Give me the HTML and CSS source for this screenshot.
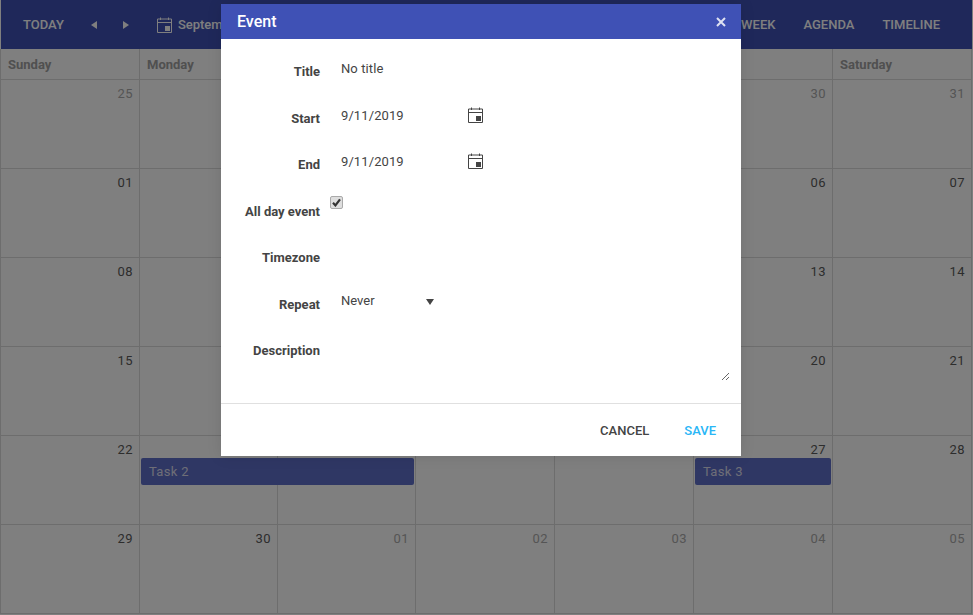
FILE: index.html
```html
<!DOCTYPE html>
<html lang="en">
<head>
  <meta charset="UTF-8">
  <title>Scheduler</title>
  <link rel="stylesheet" href="styles.css">
</head>
<body>
  <div class="scheduler">
    <!-- toolbar -->
    <div class="toolbar">
      <div class="toolbar-left">
        <span class="tool-btn">TODAY</span>
        <svg class="arrow" width="7" height="8" viewBox="0 0 7 8"><path d="M6 0V8L0 4Z"/></svg>
        <svg class="arrow" width="7" height="8" viewBox="0 0 7 8"><path d="M1 0V8L7 4Z"/></svg>
        <span class="tool-date">
          <svg class="cal-icon" width="15" height="16" viewBox="0 0 15 16"><path d="M3.5 0.5V3M11.5 0.5V3M0.5 2H14.5V15.5H0.5ZM0.5 5.5H14.5"/><rect x="8.5" y="9.5" width="4" height="4"/></svg>
          Septem
        </span>
      </div>
      <div class="toolbar-right">
        <span class="tool-btn">WEEK</span>
        <span class="tool-btn">AGENDA</span>
        <span class="tool-btn">TIMELINE</span>
      </div>
    </div>

    <!-- day names, the ones behind the dialog stay empty -->
    <div class="days-head">
      <div class="day-name">Sunday</div>
      <div class="day-name">Monday</div>
      <div class="day-name"></div>
      <div class="day-name"></div>
      <div class="day-name"></div>
      <div class="day-name"></div>
      <div class="day-name">Saturday</div>
    </div>

    <!-- month grid -->
    <div class="week">
      <div class="day muted">25</div><div class="day"></div><div class="day"></div><div class="day"></div><div class="day"></div><div class="day muted">30</div><div class="day muted">31</div>
    </div>
    <div class="week">
      <div class="day">01</div><div class="day"></div><div class="day"></div><div class="day"></div><div class="day"></div><div class="day">06</div><div class="day">07</div>
    </div>
    <div class="week">
      <div class="day">08</div><div class="day"></div><div class="day"></div><div class="day"></div><div class="day"></div><div class="day">13</div><div class="day">14</div>
    </div>
    <div class="week">
      <div class="day">15</div><div class="day"></div><div class="day"></div><div class="day"></div><div class="day"></div><div class="day">20</div><div class="day">21</div>
    </div>
    <div class="week">
      <div class="day">22</div><div class="day"></div><div class="day"></div><div class="day"></div><div class="day"></div><div class="day">27</div><div class="day">28</div>
      <div class="tasks">
        <div class="task task-2">Task 2</div>
        <div class="task task-3">Task 3</div>
      </div>
    </div>
    <div class="week">
      <div class="day">29</div><div class="day">30</div><div class="day muted">01</div><div class="day muted">02</div><div class="day muted">03</div><div class="day muted">04</div><div class="day muted">05</div>
    </div>
  </div>

  <div class="overlay"></div>

  <!-- edit dialog -->
  <div class="dialog">
    <div class="dialog-head">
      <span class="dialog-title">Event</span>
      <svg class="close-icon" width="10" height="10" viewBox="0 0 10 10"><path d="M1 1L9 9M9 1L1 9"/></svg>
    </div>
    <div class="dialog-body">
      <div class="field">
        <label class="field-label">Title</label>
        <input class="field-input" type="text" value="No title" readonly>
      </div>
      <div class="field">
        <label class="field-label">Start</label>
        <input class="field-input date-input" type="text" value="9/11/2019" readonly>
        <svg class="cal-icon dark" width="15" height="16" viewBox="0 0 15 16"><path d="M3.5 0.5V3M11.5 0.5V3M0.5 2H14.5V15.5H0.5ZM0.5 5.5H14.5"/><rect x="8.5" y="9.5" width="4" height="4"/></svg>
      </div>
      <div class="field">
        <label class="field-label">End</label>
        <input class="field-input date-input" type="text" value="9/11/2019" readonly>
        <svg class="cal-icon dark" width="15" height="16" viewBox="0 0 15 16"><path d="M3.5 0.5V3M11.5 0.5V3M0.5 2H14.5V15.5H0.5ZM0.5 5.5H14.5"/><rect x="8.5" y="9.5" width="4" height="4"/></svg>
      </div>
      <div class="field">
        <label class="field-label">All day event</label>
        <span class="checkbox">
          <svg width="9" height="9" viewBox="0 0 9 9"><path d="M1 4.8L3.4 7.4L8 1.4"/></svg>
        </span>
      </div>
      <div class="field">
        <label class="field-label">Timezone</label>
      </div>
      <div class="field">
        <label class="field-label">Repeat</label>
        <span class="select-value">Never</span>
        <svg class="select-arrow" width="8" height="6" viewBox="0 0 8 6"><path d="M0 0H8L4 6Z"/></svg>
      </div>
      <div class="field">
        <label class="field-label">Description</label>
        <textarea class="field-text"></textarea>
      </div>
    </div>
    <div class="dialog-foot">
      <span class="foot-btn">CANCEL</span>
      <span class="foot-btn primary">SAVE</span>
    </div>
  </div>
</body>
</html>
```

FILE: styles.css
```css
* {
  box-sizing: border-box;
  margin: 0;
  padding: 0;
}
html, body {
  height: 100%;
  overflow: hidden;
}
body {
  background: #fff;
  font-family: Roboto, sans-serif;
  font-size: 13px;
  color: #333;
}
/* scheduler */
.scheduler {
  --cols: 139px 138px 138px 139px 139px 139px 139px;
  width: 973px;
  padding-right: 1px;
}
.toolbar {
  display: flex;
  justify-content: space-between;
  align-items: center;
  height: 49px;
  margin-left: 1px;
  background: #3f51b5;
  color: #fff;
  font-size: 13px;
  font-weight: 500;
}
.toolbar-left {
  display: flex;
  align-items: center;
  padding-left: 22px;
}
.toolbar-right {
  display: flex;
  align-items: center;
  gap: 28px;
  padding-right: 32px;
}
.arrow {
  fill: #fff;
  margin-left: 27px;
}
.arrow + .arrow {
  margin-left: 24px;
}
.tool-date {
  display: flex;
  align-items: center;
  gap: 6px;
  margin-left: 28px;
}
.cal-icon {
  flex: none;
  fill: none;
  stroke: #fff;
}
.cal-icon rect {
  fill: #fff;
}
.cal-icon.dark {
  stroke: #444;
}
.cal-icon.dark rect {
  fill: #444;
}
.days-head,
.week {
  display: grid;
  grid-template-columns: var(--cols);
  border-left: 1px solid #dadada;
}
.day-name {
  height: 31px;
  padding: 8px 0 0 7px;
  border-right: 1px solid #dadada;
  border-bottom: 1px solid #dadada;
  font-weight: 700;
  color: #a0a0a0;
}
.week {
  position: relative;
  height: 89px;
}
.day {
  padding: 6px 6px 0 0;
  border-right: 1px solid #dadada;
  border-bottom: 1px solid #dadada;
  text-align: right;
  color: #5a5a5a;
  letter-spacing: 0.4px;
}
.day.muted {
  color: #aaa;
}
.tasks {
  position: absolute;
  inset: 22px 0 auto 0;
  display: grid;
  grid-template-columns: var(--cols);
}
.task {
  height: 27px;
  margin: 0 2px 0 1px;
  padding: 6px 8px;
  border-radius: 2px;
  background: #5f6fc9;
  color: #dde;
  font-size: 13px;
  letter-spacing: 0.3px;
}
.task-2 {
  grid-column: 2 / span 2;
}
.task-3 {
  grid-column: 6;
}
.overlay {
  position: absolute;
  inset: 0;
  background: rgba(0, 0, 0, 0.5);
}
/* dialog */
.dialog {
  position: absolute;
  top: 4px;
  left: 221px;
  width: 520px;
  height: 452px;
  background: #fff;
  box-shadow: 0 0 14px rgba(0, 0, 0, 0.1);
}
.dialog-head {
  display: flex;
  justify-content: space-between;
  align-items: center;
  height: 35px;
  padding: 0 15px 0 16px;
  background: #3f51b5;
  color: #fff;
}
.dialog-title {
  font-size: 16px;
  font-weight: 500;
}
.close-icon {
  fill: none;
  stroke: #dfe2f2;
  stroke-width: 2;
}
.dialog-body {
  height: 364px;
  padding-top: 14px;
}
.field {
  display: flex;
  align-items: flex-start;
  height: 46.5px;
  padding-top: 11px;
}
.field-label {
  flex: none;
  width: 99px;
  text-align: right;
  font-size: 13px;
  font-weight: 700;
  line-height: 16px;
  color: #444;
}
.field-input {
  width: 130px;
  margin: -4px 0 0 21px;
  border: none;
  outline: none;
  font: 13px/18px Roboto, sans-serif;
  letter-spacing: 0.1px;
  color: #444;
}
.date-input {
  width: 127px;
}
.field .cal-icon {
  margin-top: -4px;
}
.checkbox {
  display: flex;
  align-items: center;
  justify-content: center;
  width: 13px;
  height: 13px;
  margin: -8px 0 0 10px;
  border: 1px solid #aaa;
  border-radius: 2px;
  background: #dedede;
}
.checkbox svg {
  fill: none;
  stroke: #333;
  stroke-width: 2.2;
}
.select-value {
  width: 85px;
  margin: -5px 0 0 21px;
  line-height: 18px;
  color: #444;
}
.select-arrow {
  margin-top: 2px;
  fill: #444;
}
.field-text {
  display: block;
  flex: none;
  width: 400px;
  height: 49px;
  margin: -11px 0 0 10px;
  border: none;
  outline: none;
  background: transparent;
}
.dialog-foot {
  display: flex;
  justify-content: flex-end;
  align-items: center;
  gap: 35px;
  height: 53px;
  padding: 0 25px 0 0;
  border-top: 1px solid #e0e0e0;
  font-size: 13px;
  font-weight: 500;
  color: #444;
}
.foot-btn.primary {
  color: #29b6f6;
}
```
